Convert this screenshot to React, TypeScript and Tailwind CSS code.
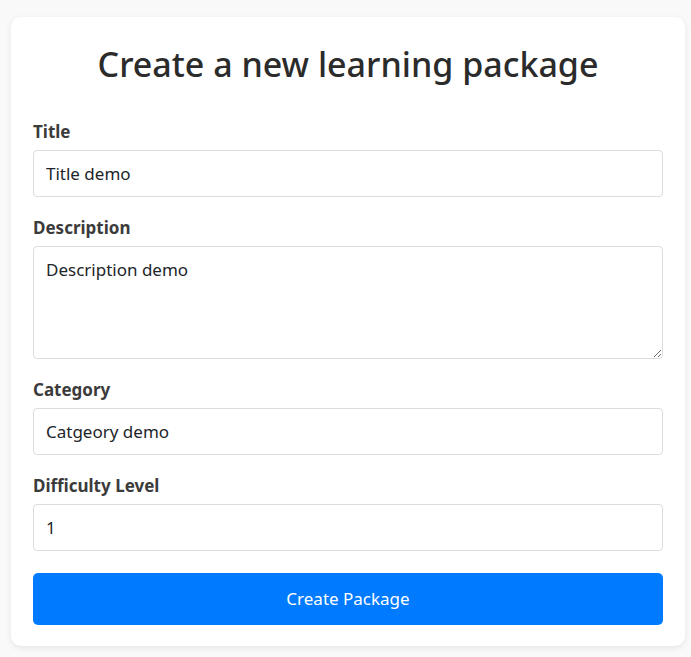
import { useState } from "react";

const font = { fontFamily: '"Noto Sans", "Open Sans", sans-serif' };

function Field({
  label,
  value,
  onChange,
}: {
  label: string;
  value: string;
  onChange: (v: string) => void;
}) {
  return (
    <div className="mb-[17px]">
      <label className="mb-[7px] block pt-[3px] text-[17px] font-bold leading-[22px] text-[#3b3b3b]">{label}</label>
      <input
        className="block h-[47px] w-full rounded-[4px] border border-[#dcdcdc] px-[12px] text-[17px] text-[#212529] outline-none"
        value={value}
        onChange={(e) => onChange(e.target.value)}
      />
    </div>
  );
}

export default function App() {
  const [title, setTitle] = useState("Title demo");
  const [description, setDescription] = useState("Description demo");
  const [category, setCategory] = useState("Catgeory demo");
  const [level, setLevel] = useState("1");

  return (
    <div className="min-h-[657px] bg-[#f9f9f9] px-[11px] pt-[17px]" style={font}>
      <div className="w-[674px] rounded-[10px] bg-white px-[22px] pb-[21px] pt-[22px] shadow-[0_2px_6px_rgba(0,0,0,0.08)]">
        <h1 className="mb-[29px] text-center text-[34px] font-medium leading-[50px] text-[#2b2b2b]">
          Create a new learning package
        </h1>
        <Field label="Title" value={title} onChange={setTitle} />
        <div className="mb-[17px]">
          <label className="mb-[7px] block pt-[3px] text-[17px] font-bold leading-[22px] text-[#3b3b3b]">Description</label>
          <textarea
            className="block h-[113px] w-full rounded-[4px] border border-[#dcdcdc] px-[12px] py-[10px] text-[17px] text-[#212529] outline-none"
            value={description}
            onChange={(e) => setDescription(e.target.value)}
          />
        </div>
        <Field label="Category" value={category} onChange={setCategory} />
        <Field label="Difficulty Level" value={level} onChange={setLevel} />
        <button className="mt-[22px] block h-[52px] w-full rounded-[5px] bg-[#007bff] text-[17px] text-white">
          Create Package
        </button>
      </div>
    </div>
  );
}
